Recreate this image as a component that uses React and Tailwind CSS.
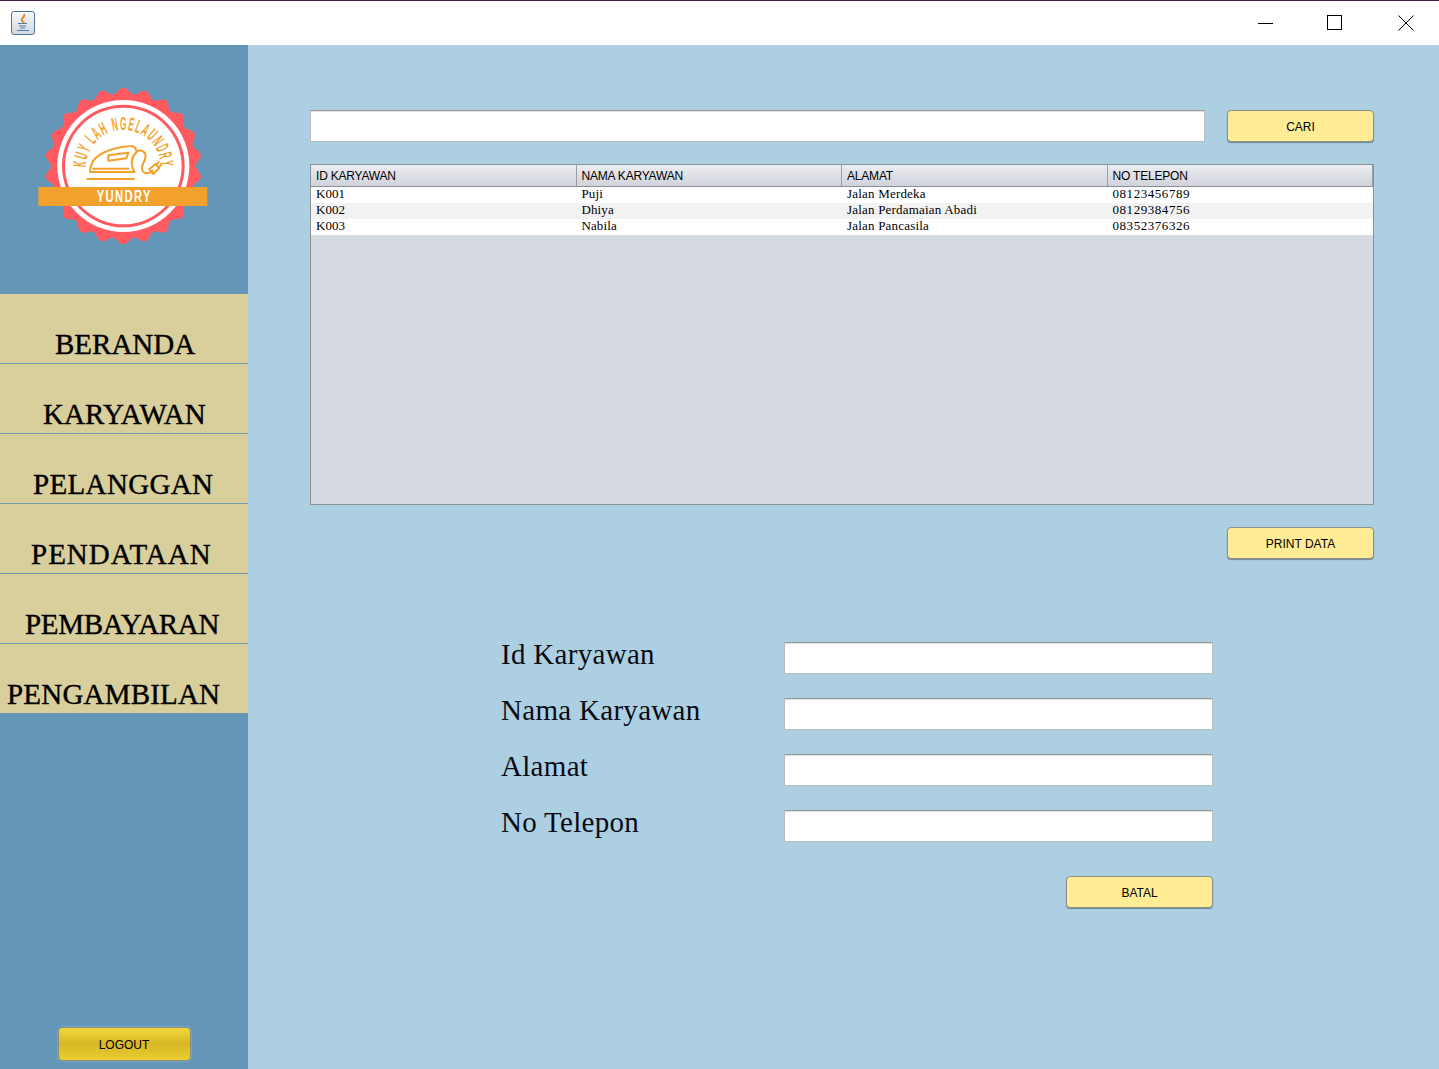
import React from "react";

const menuItems = [
  { label: "BERANDA", pad: "pl-[55px]" },
  { label: "KARYAWAN", pad: "pl-[43px] tracking-[0.1px]" },
  { label: "PELANGGAN", pad: "pl-[33px] tracking-[0.35px]" },
  { label: "PENDATAAN", pad: "pl-[31px] tracking-[1px]" },
  { label: "PEMBAYARAN", pad: "pl-[25px] tracking-[-0.3px]" },
  { label: "PENGAMBILAN", pad: "pl-[7px] tracking-[0.2px]" },
];

const rows = [
  ["K001", "Puji", "Jalan Merdeka", "08123456789"],
  ["K002", "Dhiya", "Jalan Perdamaian Abadi", "08129384756"],
  ["K003", "Nabila", "Jalan Pancasila", "08352376326"],
];

const columns = ["ID KARYAWAN", "NAMA KARYAWAN", "ALAMAT", "NO TELEPON"];
const cellTracking = ["", "tracking-[0.1px]", "tracking-[0.2px]", "tracking-[0.55px]"];
const fields = ["Id Karyawan", "Nama Karyawan", "Alamat", "No Telepon"];

// scalloped edge of the badge
const scallopPath = () => {
  const cx = 280;
  const cy = 258;
  const pts = [];
  for (let i = 0; i < 360; i++) {
    const a = (i / 360) * Math.PI * 2;
    const r = 226 + 9 * Math.cos(a * 22);
    pts.push(`${(cx + r * Math.sin(a)).toFixed(1)},${(cy - r * Math.cos(a)).toFixed(1)}`);
  }
  return `M${pts.join("L")}Z`;
};

const Logo = () => (
  <svg width="190" height="170" viewBox="0 0 570 510">
    <path d={scallopPath()} fill="#FF5A5F" />
    <circle cx="280" cy="258" r="198" fill="#fff" />
    <circle cx="280" cy="258" r="184" fill="#FF5A5F" />
    <circle cx="280" cy="258" r="175" fill="#fff" />
    <defs>
      <path id="logo-arc" d="M168 262 A112 112 0 0 1 392 262" />
    </defs>
    <text
      fill="#F4A12C"
      fontSize="56"
      fontWeight="700"
      fontFamily="'Liberation Sans',sans-serif"
      letterSpacing="9"
    >
      <textPath href="#logo-arc" textLength="352" lengthAdjust="spacingAndGlyphs">
        KUY LAH NGELAUNDRY
      </textPath>
    </text>
    <g fill="none" stroke="#F4A12C" strokeWidth="6" strokeLinecap="round" strokeLinejoin="round">
      <path d="M180 276 C180 240 205 208 300 198 C312 196 318 204 320 216 C306 228 298 250 314 276 Z" />
      <path d="M235 226 L295 218 L289 235 L235 242 Z" />
      <path d="M190 266 L295 266" />
      <path d="M172 297 L312 297" />
      <path d="M320 214 C335 208 350 215 346 235 C342 250 332 258 336 268 C342 284 360 282 368 272" />
      <path d="M358 268 L376 252 L388 264 L370 282 Z" />
      <path d="M378 254 L386 246 M386 262 L394 254" />
    </g>
    <rect x="25" y="321" width="507" height="57" fill="#F2A22C" />
    <text
      x="200"
      y="366"
      fill="#fff"
      fontSize="48"
      fontWeight="700"
      fontFamily="'Liberation Sans',sans-serif"
      letterSpacing="6"
      textLength="166"
      lengthAdjust="spacingAndGlyphs"
    >
      YUNDRY
    </text>
  </svg>
);

const JavaIcon = () => (
  <div className="flex h-[24px] w-[24px] items-center justify-center rounded-[3px] border border-[#4f7596] bg-gradient-to-b from-[#f7f8fa] to-[#d3d9e0]">
    <svg width="18" height="20" viewBox="0 0 18 20" fill="none">
      <path d="M10 1 C12 4 6 5 8 8 C9 9 10 9 10 10" stroke="#E8862A" strokeWidth="1.8" />
      <path d="M4 10.5 H13 M5 13 H12 M6 15 H11" stroke="#4f7ea6" strokeWidth="1.1" />
      <path d="M3 17.5 H15" stroke="#4f7ea6" strokeWidth="1" />
    </svg>
  </div>
);

const TitleBar = () => (
  <div className="flex h-[45px] shrink-0 items-center justify-between border-t border-[#3d2140] bg-white pl-[11px]">
    <JavaIcon />
    <div className="flex items-center">
      <svg width="16" height="16" viewBox="0 0 16 16" className="mr-[53px]">
        <path d="M0 8.5 H15" stroke="#000" strokeWidth="1" />
      </svg>
      <svg width="16" height="16" viewBox="0 0 16 16" className="mr-[55px]">
        <rect x="0.5" y="0.5" width="14" height="14" fill="none" stroke="#000" strokeWidth="1" />
      </svg>
      <svg width="16" height="16" viewBox="0 0 16 16" className="mr-[25px]">
        <path d="M0.5 0.5 L15.5 15.5 M15.5 0.5 L0.5 15.5" stroke="#000" strokeWidth="1" />
      </svg>
    </div>
  </div>
);

const Sidebar = () => (
  <aside className="flex w-[248px] shrink-0 flex-col bg-[#6497B7]">
    <div className="h-[249px] pl-[30px] pt-[35px]">
      <Logo />
    </div>
    <nav className="flex flex-col">
      {menuItems.map((item) => (
        <div
          key={item.label}
          className={`flex h-[70px] items-end border-b border-[#6f9ab0] bg-[#D8CF9C] bg-clip-padding pb-[1px] text-[29px] leading-[36px] text-black [-webkit-text-stroke:0.4px_#000] ${item.pad} font-['Liberation_Serif',serif]`}
        >
          {item.label}
        </div>
      ))}
    </nav>
    <div className="mt-auto flex justify-center pb-[8px]">
      <button className="h-[34px] w-[133px] rounded-[4px] border border-[#8a8f7a] bg-gradient-to-b from-[#F0D73C] via-[#D8B726] to-[#E9CD30] pt-[2px] text-[12px] text-black shadow-[0_0_0_1px_#7c9fc9] font-['Liberation_Sans',sans-serif]">
        LOGOUT
      </button>
    </div>
  </aside>
);

const YellowButton = ({ children }) => (
  <button className="h-[32px] w-[147px] rounded-[4px] border border-[#8f8f88] bg-[#FFEC94] pt-[2px] text-[12px] text-black shadow-[0_1px_1px_rgba(0,0,0,0.35)] font-['Liberation_Sans',sans-serif]">
    {children}
  </button>
);

const TextBox = ({ className }) => (
  <div className={`h-[32px] border border-[#b9bcbe] border-t-[#999] bg-white shadow-[inset_0_1px_0_#e2e2e2] ${className}`} />
);

const DataTable = () => (
  <div className="h-[341px] border border-[#8b9097] bg-[#D5D9E2]">
    <div className="grid h-[22px] grid-cols-4 border-b border-[#8b9097] bg-gradient-to-b from-[#ECEDF1] to-[#D1D3DB]">
      {columns.map((col) => (
        <div
          key={col}
          className="border-r border-[#9a9da5] pl-[5px] pt-[4px] text-[12px] leading-[14px] tracking-[-0.2px] text-black font-['Liberation_Sans',sans-serif]"
        >
          {col}
        </div>
      ))}
    </div>
    {rows.map((row, i) => (
      <div key={row[0]} className={`grid h-[16px] grid-cols-4 ${i % 2 === 1 ? "bg-[#F2F2F2]" : "bg-white"}`}>
        {row.map((cell, c) => (
          <div
            key={cell}
            className={`pl-[5px] text-[13px] leading-[14px] text-black font-['Liberation_Serif',serif] ${cellTracking[c]}`}
          >
            {cell}
          </div>
        ))}
      </div>
    ))}
  </div>
);

const App = () => {
  return (
    <div className="flex h-[1069px] w-[1439px] flex-col overflow-hidden bg-[#ADCFE2]">
      <TitleBar />
      <div className="flex flex-1">
        <Sidebar />
        <main className="flex-1 pl-[62px] pr-[65px] pt-[65px]">
          <div className="flex items-center justify-between">
            <TextBox className="w-[895px]" />
            <YellowButton>CARI</YellowButton>
          </div>
          <div className="mt-[22px]">
            <DataTable />
          </div>
          <div className="mt-[22px] flex justify-end">
            <YellowButton>PRINT DATA</YellowButton>
          </div>
          <div className="ml-[191px] mr-[161px] mt-[83px] flex flex-col gap-[24px]">
            {fields.map((field) => (
              <div key={field} className="flex items-start justify-between">
                <span className="text-[29px] leading-[24px] tracking-[0.3px] text-[#0a0a14] font-['Liberation_Serif',serif]">
                  {field}
                </span>
                <TextBox className="w-[429px]" />
              </div>
            ))}
          </div>
          <div className="mr-[161px] mt-[34px] flex justify-end">
            <YellowButton>BATAL</YellowButton>
          </div>
        </main>
      </div>
    </div>
  );
};

export default App;
